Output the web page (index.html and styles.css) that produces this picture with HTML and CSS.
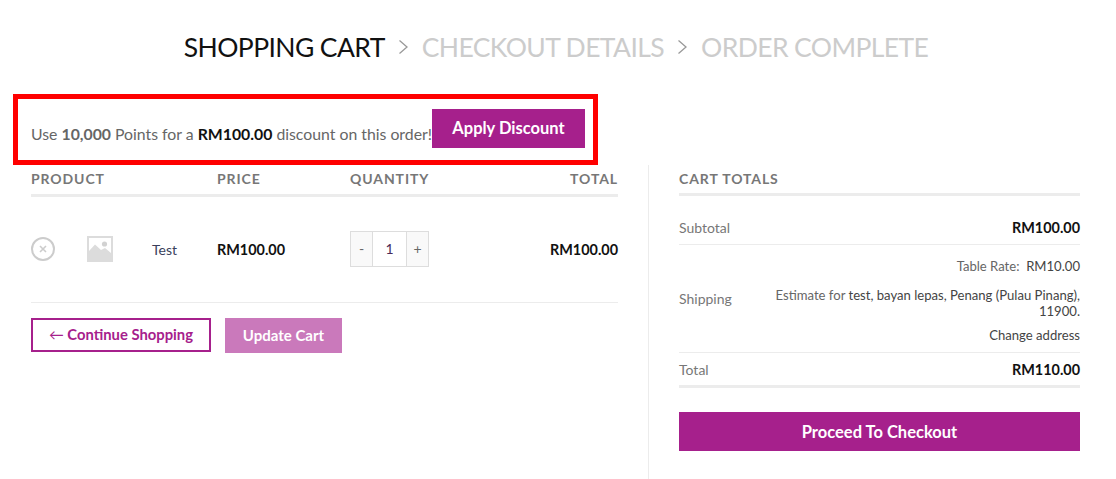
FILE: index.html
```html
<!DOCTYPE html>
<html lang="en">
<head>
  <meta charset="UTF-8" />
  <title>Cart</title>
  <link rel="stylesheet" href="styles.css">
</head>
<body>
  <h1 class="steps">
    <span class="current">Shopping Cart</span>
    <svg class="chevron" width="11" height="16" viewBox="0 0 11 16"><path d="M1.5 1.5 L9 8 L1.5 14.5" fill="none" stroke="#999" stroke-width="1.3"/></svg>
    <span>Checkout Details</span>
    <svg class="chevron" width="11" height="16" viewBox="0 0 11 16"><path d="M1.5 1.5 L9 8 L1.5 14.5" fill="none" stroke="#999" stroke-width="1.3"/></svg>
    <span>Order Complete</span>
  </h1>

  <div class="notice">
    <span class="notice-text">Use <strong>10,000</strong> Points for a <strong class="dark">RM100.00</strong> discount on this order!</span>
    <button class="btn btn-apply">Apply Discount</button>
  </div>

  <div class="cart">
    <div class="cart-left">
      <table class="cart-table">
        <colgroup>
          <col class="w-remove">
          <col class="w-thumb">
          <col class="w-name">
          <col class="w-price">
          <col class="w-qty">
          <col class="w-total">
        </colgroup>
        <thead>
          <tr>
            <th colspan="3">Product</th>
            <th>Price</th>
            <th>Quantity</th>
            <th class="col-total">Total</th>
          </tr>
        </thead>
        <tbody>
          <tr>
            <td>
              <svg class="icon" width="24" height="24" viewBox="0 0 24 24">
                <circle cx="12" cy="12" r="11" fill="none" stroke="#ccc" stroke-width="2"/>
                <path d="M9 9 L15 15 M15 9 L9 15" stroke="#ccc" stroke-width="1.6"/>
              </svg>
            </td>
            <td>
              <svg class="icon" width="26" height="26" viewBox="0 0 26 26">
                <rect width="26" height="26" fill="#dcdcdc"/>
                <rect x="2" y="2" width="22" height="22" fill="#fff"/>
                <path d="M2 15 L8 8.5 L14 14 L18 12 L24 17 V24 H2 Z" fill="#dcdcdc"/>
                <circle cx="17.5" cy="8" r="2.6" fill="#d2d2d2"/>
              </svg>
            </td>
            <td class="col-name"><a href="#">Test</a></td>
            <td class="col-price"><strong>RM100.00</strong></td>
            <td>
              <div class="qty">
                <span class="qty-btn">-</span>
                <span class="qty-val">1</span>
                <span class="qty-btn">+</span>
              </div>
            </td>
            <td class="col-total"><strong>RM100.00</strong></td>
          </tr>
        </tbody>
      </table>
      <div class="cart-actions">
        <a class="btn btn-outline" href="#"><span class="arrow">&#8592;</span> Continue Shopping</a>
        <button class="btn btn-update">Update Cart</button>
      </div>
    </div>

    <div class="cart-right">
      <h2 class="totals-title">Cart Totals</h2>
      <div class="totals-row row-subtotal">
        <span class="totals-label">Subtotal</span>
        <strong>RM100.00</strong>
      </div>
      <div class="totals-row row-shipping">
        <span class="totals-label">Shipping</span>
        <div class="shipping-info">
          <p class="rate">Table Rate: &nbsp;<b>RM10.00</b></p>
          <p class="estimate">Estimate for <b>test, bayan lepas, Penang (Pulau Pinang), 11900.</b></p>
          <p class="change">Change address</p>
        </div>
      </div>
      <div class="totals-row row-total">
        <span class="totals-label">Total</span>
        <strong>RM110.00</strong>
      </div>
      <button class="btn btn-checkout">Proceed To Checkout</button>
    </div>
  </div>
</body>
</html>
```

FILE: styles.css
```css
* {
  box-sizing: border-box;
}
html, body {
  height: 479px;
  overflow: hidden;
}
body {
  margin: 0;
  background: #fff;
  font-family: Lato, sans-serif;
  font-size: 14px;
  color: #666;
}
strong {
  color: #111;
  font-weight: 700;
  font-size: 14.4px;
}
p {
  margin: 0;
}

.steps {
  display: flex;
  justify-content: center;
  align-items: flex-start;
  gap: 13px;
  margin: 0;
  padding: 30px 4px 0 0;
  height: 94px;
  font-size: 26.5px;
  line-height: 34px;
  font-weight: 400;
  letter-spacing: -0.6px;
  text-transform: uppercase;
  color: #ccc;
}
.steps .current {
  color: #111;
}
.chevron {
  margin-top: 9px;
}

.notice {
  display: flex;
  align-items: flex-start;
  width: 585px;
  height: 71px;
  margin-left: 13px;
  padding: 10px 0 0 13px;
  border: 5px solid #f00;
  font-size: 15.8px;
}
.notice-text {
  padding-top: 14px;
  line-height: 22px;
  white-space: nowrap;
}
.notice-text strong {
  font-size: 15.8px;
  color: #666;
}
.notice-text strong.dark {
  color: #111;
}

.btn {
  display: inline-block;
  border: 0;
  font-family: Lato, sans-serif;
  font-weight: 700;
  text-decoration: none;
  text-align: center;
}
.btn-apply {
  width: 153px;
  height: 39px;
  padding: 0 0 2px;
  background: #a6208c;
  color: #fff;
  font-size: 16.5px;
}

.cart {
  display: flex;
}
.cart-left {
  width: 618px;
  padding-left: 31px;
}
.cart-right {
  width: 432px;
  height: 314px;
  margin-left: 30px;
  padding-left: 30px;
  border-left: 1px solid #ececec;
}

.cart-table {
  width: 100%;
  border-collapse: collapse;
  table-layout: fixed;
}
.w-remove { width: 56px; }
.w-thumb { width: 65px; }
.w-name { width: 65px; }
.w-price { width: 133px; }
.w-qty { width: 150px; }
.cart-table th {
  height: 30px;
  padding: 0 0 2px;
  border-bottom: 3px solid #ececec;
  font-size: 14px;
  letter-spacing: 0.9px;
  text-align: left;
  text-transform: uppercase;
  color: #777;
}
.cart-table td {
  height: 107px;
  padding: 0;
  border-bottom: 1px solid #ececec;
}
.cart-table th.col-total,
.cart-table td.col-total {
  text-align: right;
}
.icon {
  display: block;
}
.col-name a {
  color: #3a3f5c;
  text-decoration: none;
}

.qty {
  display: flex;
  width: 79px;
  height: 36px;
  border: 1px solid #ddd;
  line-height: 34px;
  text-align: center;
}
.qty-btn {
  width: 21px;
  background: #f9f9f9;
  color: #666;
}
.qty-val {
  flex: 1;
  border-left: 1px solid #ddd;
  border-right: 1px solid #ddd;
  color: #4a2a5a;
}

.cart-actions {
  display: flex;
  gap: 14px;
  margin-top: 15px;
}
.btn-outline {
  width: 180px;
  height: 34px;
  border: 2px solid #a6208c;
  color: #a6208c;
  font-size: 14.8px;
  line-height: 29px;
}
.arrow {
  font-weight: 400;
}
.btn-update {
  width: 117px;
  height: 35px;
  background: #ca79bb;
  color: #fff;
  font-size: 15px;
}

.totals-title {
  height: 31px;
  margin: 0;
  border-bottom: 3px solid #ececec;
  font-size: 14px;
  line-height: 28px;
  letter-spacing: 0.9px;
  text-transform: uppercase;
  color: #777;
}
.totals-row {
  display: flex;
  justify-content: space-between;
  align-items: center;
  border-bottom: 1px solid #ececec;
}
.totals-label {
  color: #777;
}
.row-subtotal {
  height: 49px;
  padding-top: 14px;
}
.row-shipping {
  height: 108px;
}
.row-total {
  height: 35px;
  border-bottom: 3px solid #ececec;
}
.shipping-info {
  width: 310px;
  padding-top: 4px;
  font-size: 13.1px;
  line-height: 16px;
  text-align: right;
}
.shipping-info b {
  font-weight: 400;
  color: #444;
}
.rate {
  margin-bottom: 13px;
}
.estimate {
  margin-bottom: 8px;
}
.change {
  color: #444;
}
.btn-checkout {
  display: block;
  width: 100%;
  height: 39px;
  margin-top: 24px;
  background: #a6208c;
  color: #fff;
  font-size: 16.5px;
}
```
